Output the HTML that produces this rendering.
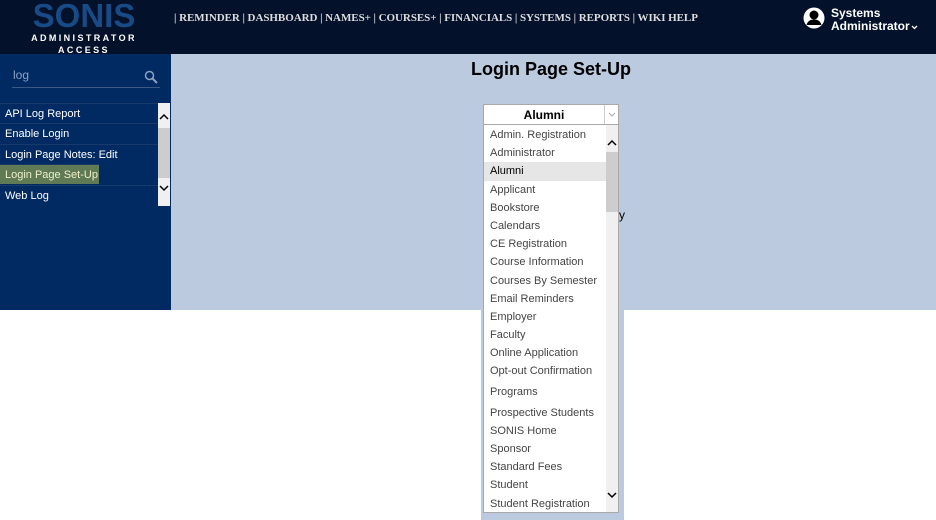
<!DOCTYPE html>
<html><head><style>
*{margin:0;padding:0;box-sizing:border-box}
body{width:936px;height:520px;overflow:hidden;background:#fff;font-family:"Liberation Sans",Arial,sans-serif;position:relative}
.hdr{position:absolute;left:0;top:0;width:936px;height:54px;background:#03112b}
.logo{position:absolute;left:28px;top:0;width:112px;text-align:center}
.logo .s{font-size:33px;font-weight:bold;color:#184a85;line-height:32px}
.logo .a{font-size:9px;font-weight:bold;color:#fff;letter-spacing:2.4px;line-height:12px}
.nav{position:absolute;left:174px;top:12px;font-family:"Liberation Serif",serif;font-weight:bold;font-size:11px;color:#ddd;white-space:nowrap;letter-spacing:-0.05px}
.user{position:absolute;top:7px;color:#fff;font-weight:bold;font-size:12px;line-height:13px}
.side{position:absolute;left:0;top:54px;width:171px;height:256px;background:#022a62}
.main{position:absolute;left:171px;top:54px;width:765px;height:256px;background:#bccae0}
.ext{position:absolute;left:481px;top:310px;width:143px;height:210px;background:#bccae0}
.search{position:absolute;left:12px;top:68px;width:148px;height:20px;border-bottom:1px solid #3d5a86;color:#8aa0c2;font-size:12px;padding-left:1px}
.item{position:absolute;left:0;width:158px;height:20px;color:#fff;font-size:11px;padding:4px 5px;border-top:1px solid #17396b;white-space:nowrap}
.sb{position:absolute;left:158px;top:103px;width:12px;height:103px;background:#f0f0f0}
h1{position:absolute;left:471px;top:59px;font-size:18px;font-weight:bold;color:#000}
.sel{position:absolute;left:483px;top:104px;width:136px;height:21px;background:#fff;border:1px solid #a9a9a9;font-size:12px;font-weight:bold;text-align:center;line-height:21px;padding-right:14px}
.sel .ar{position:absolute;right:0;top:0;width:14px;height:19px;border-left:1px solid #ccc}
.list{position:absolute;left:483px;top:124px;width:136px;height:389px;background:#fff;border:1px solid #a9a9a9;padding-top:1px}
.list div{height:18.2px;font-size:11px;color:#444;padding-left:6px;line-height:18px;width:122px}
.list .on{background:#e6e6e6;color:#000}
.lsb{position:absolute;left:606px;top:125px;width:12px;height:387px;background:#f0f0f0}
</style></head><body>
<div class="hdr">
<div class="logo"><div class="s">SONIS</div><div class="a">ADMINISTRATOR</div><div class="a">ACCESS</div></div>
<div class="nav">| REMINDER | DASHBOARD | NAMES+ | COURSES+ | FINANCIALS | SYSTEMS | REPORTS | WIKI HELP</div>
<svg style="position:absolute;left:803px;top:7px" width="22" height="22" viewBox="0 0 22 22"><circle cx="11" cy="11" r="10.5" fill="#fff"/><circle cx="11" cy="8" r="4.5" fill="#000"/><path d="M3.5 18c1-4 4-5.5 7.5-5.5s6.5 1.5 7.5 5.5z" fill="#000"/></svg>
<div class="user" style="left:831px">Systems<br>Administrator<svg width="7" height="5" viewBox="0 0 7 5" style="margin-left:1px"><path d="M1 1l2.5 2.5L6 1" stroke="#fff" stroke-width="1.3" fill="none"/></svg></div>
</div>
<div class="side"></div>
<div class="main"></div>
<div class="ext"></div>
<div class="search">log<svg style="position:absolute;right:2px;top:2px" width="14" height="14" viewBox="0 0 14 14"><circle cx="5.5" cy="5.5" r="4" fill="none" stroke="#8aa0c2" stroke-width="1.5"/><path d="M8.5 8.5l4.5 4.5" stroke="#8aa0c2" stroke-width="2"/></svg></div>
<div class="item" style="top:103px">API Log Report</div>
<div class="item" style="top:123px">Enable Login</div>
<div class="item" style="top:144px">Login Page Notes: Edit</div>
<div class="item" style="top:164px;width:99px;background:#5f7a55;color:#eef0c8">Login Page Set-Up</div>
<div class="item" style="top:185px">Web Log</div>
<div class="sb"><div style="position:absolute;top:25px;left:0;width:12px;height:50px;background:#cdcdcd"></div>
<svg style="position:absolute;top:10px;left:1px" width="10" height="7"><path d="M1 6l4-4 4 4" stroke="#000" stroke-width="1.5" fill="none"/></svg>
<svg style="position:absolute;top:82px;left:1px" width="10" height="7"><path d="M1 1l4 4 4-4" stroke="#000" stroke-width="1.5" fill="none"/></svg></div>
<h1>Login Page Set-Up</h1>
<div style="position:absolute;left:619px;top:208px;font-size:12px">y</div>
<div class="sel">Alumni<span class="ar"><svg style="position:absolute;left:3px;top:7px" width="8" height="5"><path d="M1 1l3 3 3-3" stroke="#aaa" fill="none"/></svg></span></div>
<div class="list">
<div>Admin. Registration</div><div>Administrator</div><div class="on">Alumni</div><div>Applicant</div><div>Bookstore</div><div>Calendars</div><div>CE Registration</div><div>Course Information</div><div>Courses By Semester</div><div>Email Reminders</div><div>Employer</div><div>Faculty</div><div>Online Application</div><div>Opt-out Confirmation</div><div style="height:23px;line-height:23px">Programs</div><div>Prospective Students</div><div>SONIS Home</div><div>Sponsor</div><div>Standard Fees</div><div>Student</div><div>Student Registration</div>
</div>
<div class="lsb"><div style="position:absolute;top:27px;left:0;width:12px;height:60px;background:#cdcdcd"></div>
<svg style="position:absolute;top:14px;left:1px" width="10" height="7"><path d="M1 6l4-4 4 4" stroke="#000" stroke-width="1.5" fill="none"/></svg>
<svg style="position:absolute;top:367px;left:1px" width="10" height="7"><path d="M1 1l4 4 4-4" stroke="#000" stroke-width="1.5" fill="none"/></svg></div>
</body></html>
